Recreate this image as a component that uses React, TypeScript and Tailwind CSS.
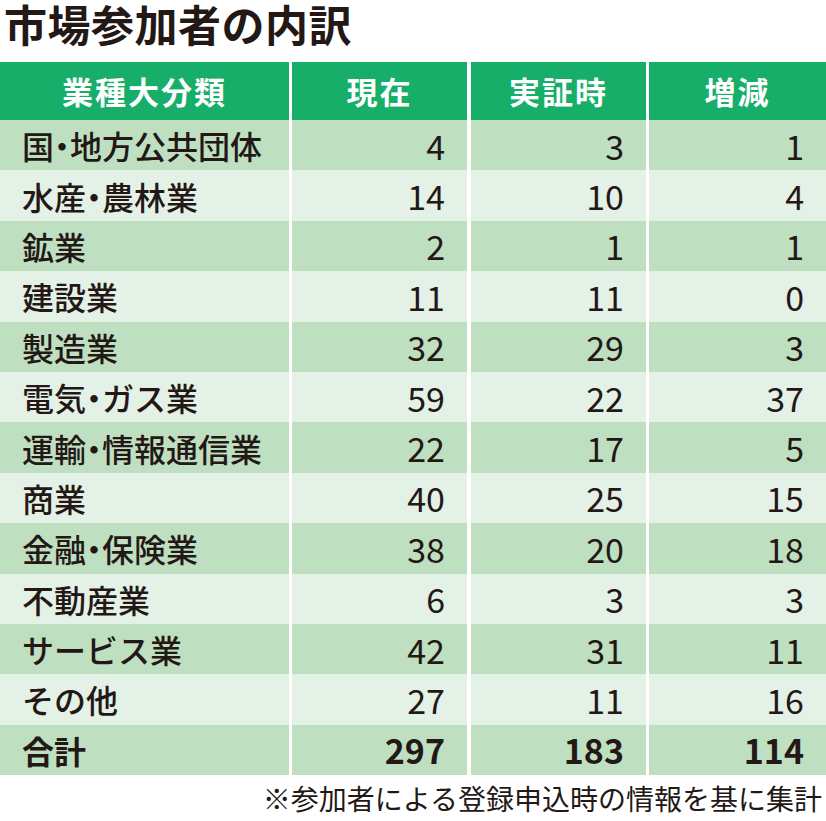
import React from "react";

const rows: [string, number, number, number][] = [
  ["国・地方公共団体", 4, 3, 1],
  ["水産・農林業", 14, 10, 4],
  ["鉱業", 2, 1, 1],
  ["建設業", 11, 11, 0],
  ["製造業", 32, 29, 3],
  ["電気・ガス業", 59, 22, 37],
  ["運輸・情報通信業", 22, 17, 5],
  ["商業", 40, 25, 15],
  ["金融・保険業", 38, 20, 18],
  ["不動産業", 6, 3, 3],
  ["サービス業", 42, 31, 11],
  ["その他", 27, 11, 16],
];

const font = { fontFamily: '"Noto Sans CJK JP", "Noto Sans", sans-serif' };

// the middle dot is set half-width in the original
function Label({ text }: { text: string }) {
  const parts = text.split("・");
  return (
    <>
      {parts.map((p, i) => (
        <React.Fragment key={i}>
          {i > 0 && <span className="[font-feature-settings:'halt']">・</span>}
          {p}
        </React.Fragment>
      ))}
    </>
  );
}

function Row({
  label,
  values,
  dark,
  bold,
}: {
  label: string;
  values: number[];
  dark: boolean;
  bold?: boolean;
}) {
  const bg = dark ? "bg-[#bfdfc1]" : "bg-[#e4f1e6]";
  return (
    <div className="flex h-[50.4px] gap-x-[3px]">
      <div
        className={`${bg} w-[289px] flex items-center pl-[22px] text-[32px] whitespace-nowrap ${
          bold ? "font-bold" : "font-medium"
        }`}
      >
        <span>
          <Label text={label} />
        </span>
      </div>
      {values.map((v, i) => (
        <div
          key={i}
          className={`${bg} ${
            i === 2 ? "flex-1" : i === 1 ? "w-[175px] ml-[1px]" : "w-[175px]"
          } flex items-center justify-end pr-[22px] text-[34px] ${
            bold ? "font-bold" : "font-normal"
          }`}
        >
          {v}
        </div>
      ))}
    </div>
  );
}

export default function App() {
  return (
    <div className="w-[826px] h-[821px] bg-white text-[#231815]" style={font}>
      <h1 className="pl-[4px] pb-[15px] text-[43px] font-bold leading-[47px] tracking-[0.5px]">
        市場参加者の内訳
      </h1>

      <div className="flex h-[58px] gap-x-[3px] text-white text-[31px] font-bold tracking-[2px]">
        <div className="bg-[#17ae69] w-[289px] flex items-center justify-center">業種大分類</div>
        <div className="bg-[#17ae69] w-[175px] flex items-center justify-center">現在</div>
        <div className="bg-[#17ae69] w-[175px] ml-[1px] flex items-center justify-center">実証時</div>
        <div className="bg-[#17ae69] flex-1 flex items-center justify-center">増減</div>
      </div>

      {rows.map(([label, a, b, c], i) => (
        <Row key={label} label={label} values={[a, b, c]} dark={i % 2 === 0} />
      ))}
      <Row label="合計" values={[297, 183, 114]} dark bold />

      <p className="text-right pr-[4px] mt-[5px] text-[28px] leading-[36px]">
        ※参加者による登録申込時の情報を基に集計
      </p>
    </div>
  );
}
